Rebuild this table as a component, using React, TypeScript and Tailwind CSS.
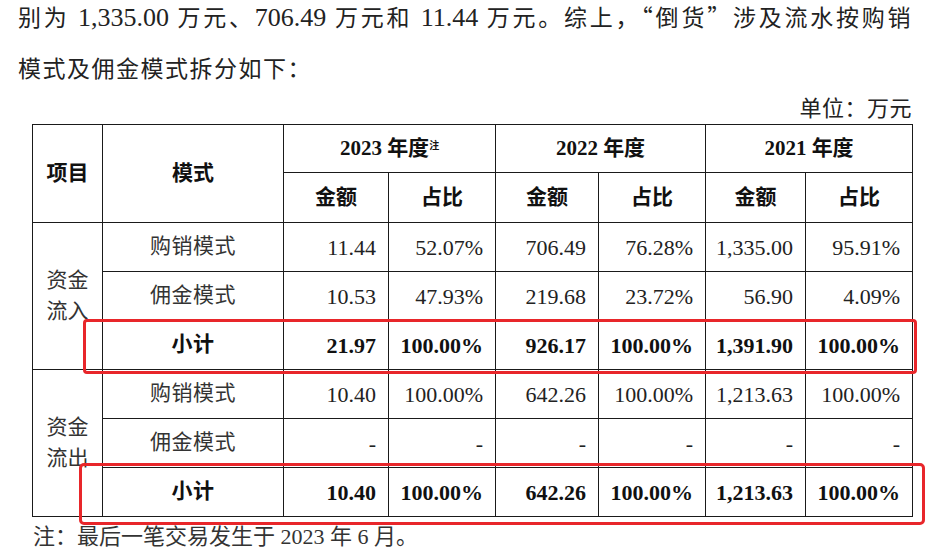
const font = "font-['Liberation_Serif','Noto_Sans_CJK_SC',serif]"

type Row = {
  mode: string
  values: string[]
  bold?: boolean
}

const inflow: Row[] = [
  { mode: "购销模式", values: ["11.44", "52.07%", "706.49", "76.28%", "1,335.00", "95.91%"] },
  { mode: "佣金模式", values: ["10.53", "47.93%", "219.68", "23.72%", "56.90", "4.09%"] },
  { mode: "小计", values: ["21.97", "100.00%", "926.17", "100.00%", "1,391.90", "100.00%"], bold: true },
]

const outflow: Row[] = [
  { mode: "购销模式", values: ["10.40", "100.00%", "642.26", "100.00%", "1,213.63", "100.00%"] },
  { mode: "佣金模式", values: ["-", "-", "-", "-", "-", "-"] },
  { mode: "小计", values: ["10.40", "100.00%", "642.26", "100.00%", "1,213.63", "100.00%"], bold: true },
]

const cell = "border-[1.5px] border-[#1a1a1a] p-0"

function Num({ children }: { children: string }) {
  // numbers in the running text are set a bit larger than the Chinese
  return <span className="text-[26px] tracking-normal">{children}</span>
}

function Group({ label, rows }: { label: [string, string]; rows: Row[] }) {
  return (
    <>
      {rows.map((r, i) => (
        <tr key={r.mode + i} className="h-[49px]">
          {i === 0 && (
            <td rowSpan={3} className={`${cell} text-center align-middle text-[21px] leading-[31px] text-[#333]`}>
              {label[0]}
              <br />
              {label[1]}
            </td>
          )}
          <td className={`${cell} text-center text-[21px] tracking-[0.5px] ${r.bold ? "font-bold text-[#111]" : "text-[#333]"}`}>
            {r.mode}
          </td>
          {r.values.map((v, j) => (
            <td
              key={j}
              className={`${cell} text-right pr-[12px] text-[22px] ${r.bold ? "font-bold text-[#111]" : "text-[#222]"}`}
            >
              {v}
            </td>
          ))}
        </tr>
      ))}
    </>
  )
}

export default function App() {
  return (
    <div className={`relative w-[932px] h-[550px] overflow-hidden bg-white text-[#222] ${font}`}>
      {/* paragraph, first line cut at the top */}
      <div className="pl-[18px] pr-[20px] -mt-[9px] text-[23px] leading-[51px] tracking-[1.5px]">
        <div className="text-justify [text-align-last:justify]">
          别为 <Num>1,335.00</Num> 万元、<Num>706.49</Num> 万元和 <Num>11.44</Num> 万元。综上，
          <span className="font-['Noto_Sans_CJK_SC',sans-serif]">“倒货”</span>涉及流水按购销
        </div>
        <div>模式及佣金模式拆分如下：</div>
      </div>

      <div className="pr-[20px] text-right text-[22px] leading-[28px] tracking-[0.5px]">单位：万元</div>

      <table className="ml-[32px] mt-[1px] w-[880px] table-fixed border-collapse">
        <colgroup>
          <col className="w-[70px]" />
          <col className="w-[181px]" />
          <col className="w-[105px]" />
          <col className="w-[107px]" />
          <col className="w-[103px]" />
          <col className="w-[107px]" />
          <col className="w-[100px]" />
          <col className="w-[107px]" />
        </colgroup>
        <thead>
          <tr className="h-[48px] text-[21px] font-bold text-[#111]">
            <th rowSpan={2} className={`${cell} text-center`}>项目</th>
            <th rowSpan={2} className={`${cell} text-center`}>模式</th>
            <th colSpan={2} className={`${cell} text-center`}>
              2023 年度<sup className="relative -top-[6px] text-[10px]">注</sup>
            </th>
            <th colSpan={2} className={`${cell} text-center`}>2022 年度</th>
            <th colSpan={2} className={`${cell} text-center`}>2021 年度</th>
          </tr>
          <tr className="h-[50px] text-[21px] font-bold text-[#111]">
            <th className={`${cell} text-center`}>金额</th>
            <th className={`${cell} text-center`}>占比</th>
            <th className={`${cell} text-center`}>金额</th>
            <th className={`${cell} text-center`}>占比</th>
            <th className={`${cell} text-center`}>金额</th>
            <th className={`${cell} text-center`}>占比</th>
          </tr>
        </thead>
        <tbody>
          <Group label={["资金", "流入"]} rows={inflow} />
          <Group label={["资金", "流出"]} rows={outflow} />
        </tbody>
      </table>

      <div className="pl-[33px] mt-[6px] text-[22px] leading-[28px] text-[#333]">
        注：最后一笔交易发生于 2023 年 6 月。
      </div>

      {/* red highlight boxes drawn over the table */}
      <div className="absolute left-[83px] top-[319px] w-[834px] h-[55px] rounded-[4px] border-[3px] border-[#e8262a]" />
      <div className="absolute left-[79px] top-[463px] w-[846px] h-[62px] rounded-[5px] border-[3px] border-[#e8262a]" />
    </div>
  )
}
